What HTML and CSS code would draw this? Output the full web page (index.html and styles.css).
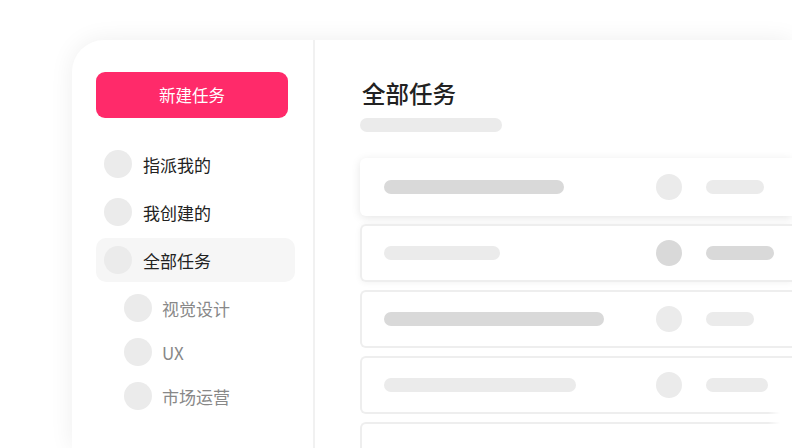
FILE: index.html
```html
<!DOCTYPE html>
<html lang="zh-CN">
<head>
    <meta charset="UTF-8">
    <meta name="viewport" content="width=device-width, initial-scale=1.0">
    <title>全部任务</title>
    <link rel="stylesheet" href="styles.css">
</head>
<body>
    <div class="window">
        <aside class="sidebar">
            <button class="new-task">新建任务</button>

            <ul class="nav">
                <li class="nav-item"><span class="dot"></span>指派我的</li>
                <li class="nav-item"><span class="dot"></span>我创建的</li>
                <li class="nav-item active"><span class="dot"></span>全部任务</li>
                <li class="nav-item sub"><span class="dot"></span>视觉设计</li>
                <li class="nav-item sub"><span class="dot"></span>UX</li>
                <li class="nav-item sub"><span class="dot"></span>市场运营</li>
            </ul>
        </aside>

        <main class="content">
            <h1>全部任务</h1>
            <div class="bar subtitle"></div>

            <div class="task-list">
                <div class="task raised">
                    <div class="bar dark" style="width: 180px"></div>
                    <span class="avatar"></span>
                    <div class="bar" style="width: 58px"></div>
                </div>
                <div class="task hover">
                    <div class="bar" style="width: 116px"></div>
                    <span class="avatar dark"></span>
                    <div class="bar dark" style="width: 68px"></div>
                </div>
                <div class="task">
                    <div class="bar dark" style="width: 220px"></div>
                    <span class="avatar"></span>
                    <div class="bar" style="width: 48px"></div>
                </div>
                <div class="task">
                    <div class="bar" style="width: 192px"></div>
                    <span class="avatar"></span>
                    <div class="bar" style="width: 62px"></div>
                </div>
                <div class="task"></div>
            </div>
        </main>
    </div>
</body>
</html>
```

FILE: styles.css
```css
/* Page */
body {
    margin: 0;
    height: 448px;
    overflow: hidden;
    background: #fff;
    font-family: "Noto Sans CJK SC", "Noto Sans", sans-serif;
    padding: 40px 0 0 72px;
    box-sizing: border-box;
}

/* App window, cut off by the viewport */
.window {
    width: 720px;
    height: 408px;
    display: flex;
    background: #fff;
    border-radius: 32px 0 0 0;
    box-shadow: 0 0 24px rgba(0, 0, 0, 0.07);
    position: relative;
}

/* soft fade at the lower right corner */
.window::after {
    content: "";
    position: absolute;
    right: 0;
    bottom: 0;
    width: 24px;
    height: 46px;
    background: linear-gradient(to right, rgba(255, 255, 255, 0), #fff 50%);
    pointer-events: none;
}

/* Sidebar */
.sidebar {
    width: 243px;
    flex-shrink: 0;
    padding: 32px 18px 0 24px;
    box-sizing: border-box;
    border-right: 2px solid #f1f1f1;
}

.new-task {
    width: 192px;
    height: 46px;
    border: none;
    border-radius: 9px;
    background: #ff2a6a;
    color: #fff;
    font-family: inherit;
    font-size: 16.5px;
    cursor: pointer;
}

.nav {
    list-style: none;
    margin: 24px 0 0;
    padding: 0;
}

.nav-item {
    height: 44px;
    margin-bottom: 4px;
    display: flex;
    align-items: center;
    gap: 11px;
    padding-left: 8px;
    border-radius: 10px;
    font-size: 17px;
    color: #222;
}

.nav-item.active {
    background: #f6f6f6;
}

.nav-item.sub {
    margin-bottom: 0;
    padding-left: 28px;
    gap: 10px;
    color: #888;
}

.dot {
    width: 28px;
    height: 28px;
    border-radius: 50%;
    background: #ebebeb;
    flex-shrink: 0;
}

/* Main content */
.content {
    flex: 1;
    padding: 36px 0 0 45px;
    overflow: hidden;
}

h1 {
    margin: 0 0 0 2px;
    font-size: 23.5px;
    font-weight: 500;
    color: #222;
    line-height: 34px;
}

.bar {
    height: 14px;
    border-radius: 7px;
    background: #ebebeb;
}

.bar.dark {
    background: #d9d9d9;
}

.subtitle {
    width: 142px;
    margin-top: 8px;
}

.task-list {
    margin-top: 26px;
    padding-left: 3px;
    margin-left: -3px;
    display: flex;
    flex-direction: column;
    gap: 8px;
}

.task {
    height: 58px;
    box-sizing: border-box;
    border: 2px solid #eeeeee;
    border-right: none;
    border-radius: 6px 0 0 6px;
    display: flex;
    align-items: center;
    padding-left: 22px;
    position: relative;
    flex-shrink: 0;
}

.task.raised {
    border-color: transparent;
    box-shadow: 0 2px 10px rgba(0, 0, 0, 0.1);
}

.task.hover {
    box-shadow: 0 1px 6px rgba(0, 0, 0, 0.05);
}

.task .bar:first-child {
    flex-shrink: 0;
}

.avatar {
    position: absolute;
    left: 294px;
    width: 26px;
    height: 26px;
    border-radius: 50%;
    background: #ebebeb;
}

.avatar.dark {
    background: #d9d9d9;
}

.task .bar:last-child {
    position: absolute;
    left: 344px;
}
```
